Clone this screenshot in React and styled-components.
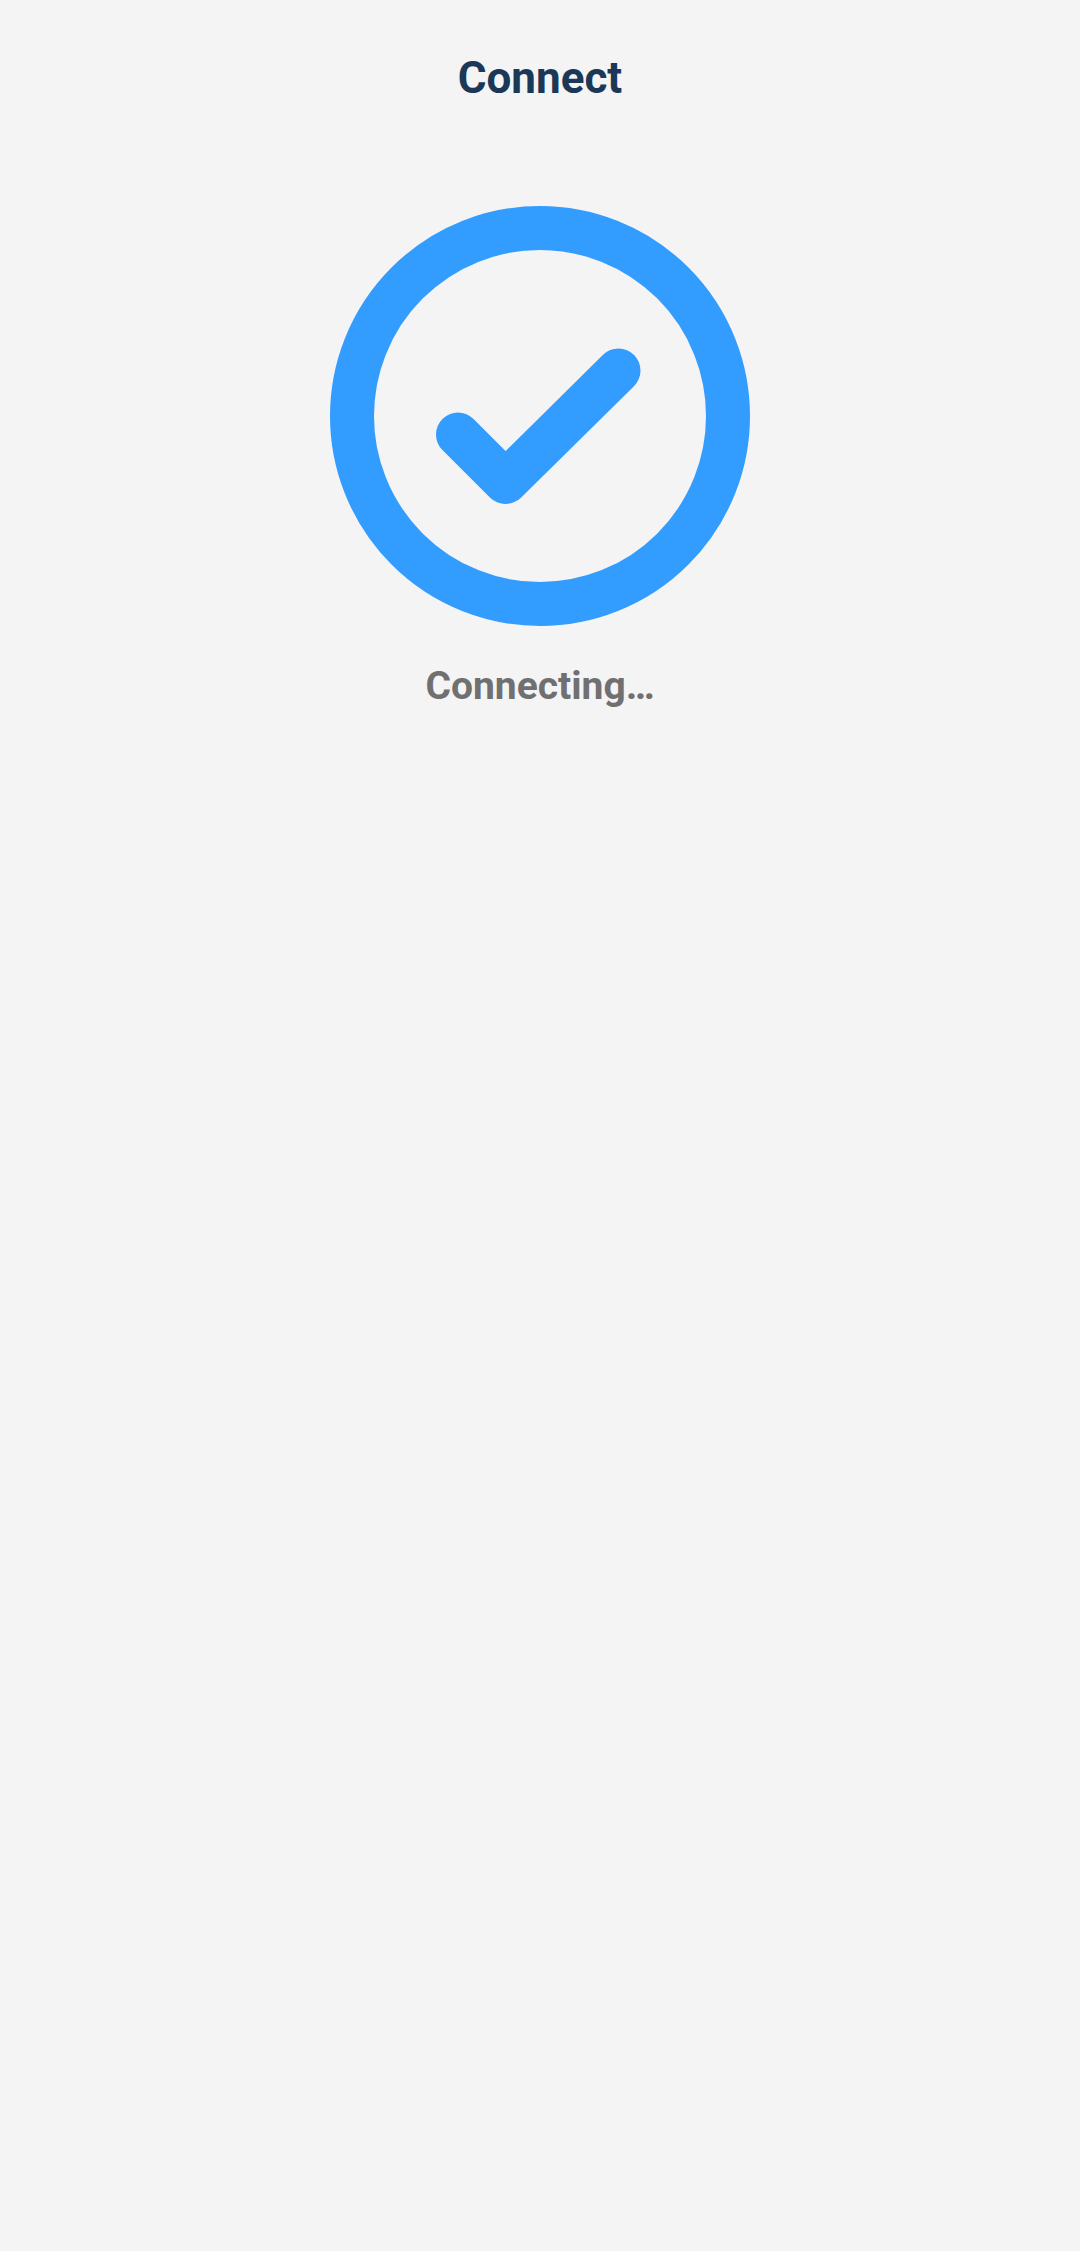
import React from "react";
import styled, { createGlobalStyle } from "styled-components";

const Global = createGlobalStyle`
  html, body { margin: 0; padding: 0; background: #f4f4f4; }
  * { box-sizing: border-box; }
`;

const Page = styled.main`
  width: 1080px;
  height: 2251px;
  background: #f4f4f4;
  display: flex;
  flex-direction: column;
  align-items: center;
  padding-top: 53px;
  font-family: Roboto, "Liberation Sans", sans-serif;
`;

const Title = styled.h1`
  margin: 0;
  font-size: 44px;
  line-height: 50px;
  font-weight: 700;
  color: #1c3857;
`;

const StatusIcon = styled.svg`
  display: block;
  width: 420px;
  height: 420px;
  margin-top: 103px;
`;

const Status = styled.p`
  margin: 37px 0 0;
  font-size: 39px;
  line-height: 46px;
  font-weight: 700;
  color: #707070;
`;

export default function App() {
  return (
    <Page>
      <Global />
      <Title>Connect</Title>
      <StatusIcon viewBox="0 0 420 420" fill="none" stroke="#329cff" strokeWidth="44" strokeLinecap="round" strokeLinejoin="round">
        <circle cx="210" cy="210" r="188" />
        <path d="M128 228.5 L175.5 276 L288.5 164.5" />
      </StatusIcon>
      <Status>Connecting…</Status>
    </Page>
  );
}
